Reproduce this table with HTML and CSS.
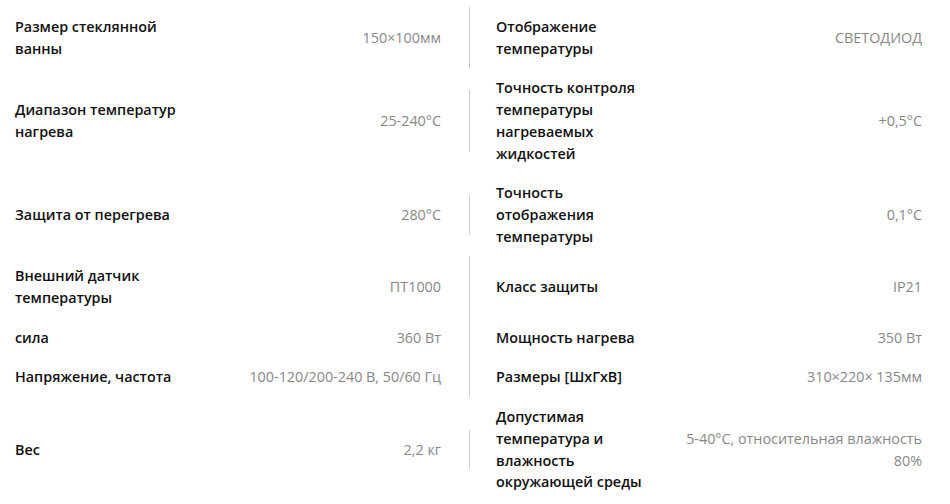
FILE: index.html
```html
<!DOCTYPE html>
<html lang="ru">
<head>
    <meta charset="UTF-8">
    <meta name="viewport" content="width=device-width, initial-scale=1.0">
    <title>Характеристики</title>
    <link rel="stylesheet" href="styles.css">
</head>
<body>

    <div class="specs">
        <div class="spec left">
            <div class="spec-name">Размер стеклянной ванны</div>
            <div class="spec-value">150×100мм</div>
        </div>
        <div class="spec right">
            <div class="spec-name">Отображение температуры</div>
            <div class="spec-value">СВЕТОДИОД</div>
        </div>

        <div class="spec left">
            <div class="spec-name">Диапазон температур нагрева</div>
            <div class="spec-value">25-240°C</div>
        </div>
        <div class="spec right">
            <div class="spec-name">Точность контроля температуры нагреваемых жидкостей</div>
            <div class="spec-value">+0,5°C</div>
        </div>

        <div class="spec left">
            <div class="spec-name">Защита от перегрева</div>
            <div class="spec-value">280°C</div>
        </div>
        <div class="spec right">
            <div class="spec-name">Точность отображения температуры</div>
            <div class="spec-value">0,1°C</div>
        </div>

        <div class="spec left">
            <div class="spec-name">Внешний датчик температуры</div>
            <div class="spec-value">ПТ1000</div>
        </div>
        <div class="spec right">
            <div class="spec-name">Класс защиты</div>
            <div class="spec-value">IP21</div>
        </div>

        <div class="spec left">
            <div class="spec-name">сила</div>
            <div class="spec-value">360 Вт</div>
        </div>
        <div class="spec right">
            <div class="spec-name">Мощность нагрева</div>
            <div class="spec-value">350 Вт</div>
        </div>

        <div class="spec left">
            <div class="spec-name">Напряжение, частота</div>
            <div class="spec-value">100-120/200-240 В, 50/60 Гц</div>
        </div>
        <div class="spec right">
            <div class="spec-name">Размеры [ШхГхВ]</div>
            <div class="spec-value">310×220× 135мм</div>
        </div>

        <div class="spec left">
            <div class="spec-name">Вес</div>
            <div class="spec-value">2,2 кг</div>
        </div>
        <div class="spec right">
            <div class="spec-name">Допустимая температура и влажность окружающей среды</div>
            <div class="spec-value">5-40°C, относительная влажность 80%</div>
        </div>
    </div>

</body>
</html>
```

FILE: styles.css
```css
body {
    margin: 0;
    padding: 7px 0 0 15px;
    background-color: #fff;
    font-family: 'Open Sans', sans-serif;
    font-size: 14.35px;
    line-height: 21.7px;
}
.specs {
    display: grid;
    grid-template-columns: 455px 1fr;
    align-items: center;
}
.spec {
    display: flex;
    align-items: center;
    padding: 9px 0;
}
.spec.left {
    padding-right: 28px;
    border-right: 1px solid #ccc;
}
.spec.right {
    padding-left: 26px;
    padding-right: 28px;
}
.spec-name {
    flex: 0 0 164px;
    font-weight: 600;
    color: #111;
}
.spec-value {
    flex: 1;
    text-align: right;
    color: #888;
}
```
